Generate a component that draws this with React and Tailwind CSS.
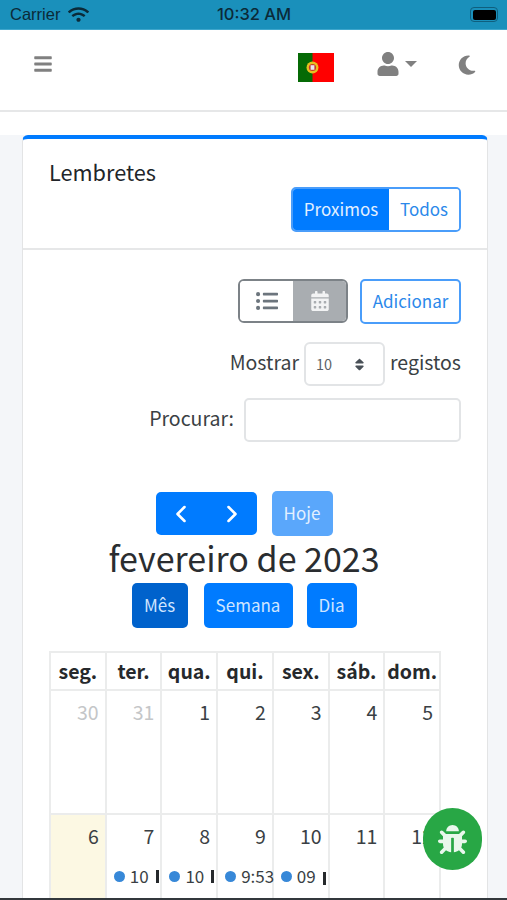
import React from 'react';
import { FaBars, FaUser, FaListUl, FaCalendarAlt, FaBug, FaSort, FaWifi } from 'react-icons/fa';
import { FaMoon } from 'react-icons/fa6';
import { ChevronLeft, ChevronRight } from 'lucide-react';

const weekDays = ['seg.', 'ter.', 'qua.', 'qui.', 'sex.', 'sáb.', 'dom.'];
const firstWeek = ['30', '31', '1', '2', '3', '4', '5'];
const secondWeek = [
    { day: '6', today: true },
    { day: '7', time: '10', bar: true },
    { day: '8', time: '10', bar: true },
    { day: '9', time: '9:53' },
    { day: '10', time: '09', bar: true, low: true },
    { day: '11' },
    { day: '12' },
];

const Flag = () => (
    <svg width="36" height="29" viewBox="0 0 36 29" className="block">
        <rect width="36" height="29" fill="#ff0000" />
        <rect width="14.5" height="29" fill="#056a05" />
        <circle cx="14.5" cy="14.5" r="6" fill="#e8c020" />
        <circle cx="14.5" cy="14.5" r="3.6" fill="#c8342c" />
        <rect x="12.6" y="12.2" width="3.8" height="4.6" fill="#e8e8f0" />
    </svg>
);

const App = () => {
    return (
        <div
            className="h-[900px] w-[507px] overflow-hidden bg-[#f4f6f9] text-[#212529] flex flex-col"
            style={{ fontFamily: '"Noto Sans CJK SC", "Noto Sans", sans-serif' }}
        >
            {/* Status bar */}
            <div className="h-[30px] shrink-0 bg-[#1a90bb] grid grid-cols-3 items-center pl-[10px] pr-[9px] text-[#0b2a38] border-b border-[#3ea6cc]">
                <div className="flex items-center gap-[8px]">
                    <span className="text-[16.5px] leading-none" style={{ fontFamily: '"Liberation Sans", sans-serif' }}>Carrier</span>
                    <FaWifi className="text-[21px]" />
                </div>
                <span className="text-[16.5px] leading-none font-medium text-center whitespace-nowrap" style={{ fontFamily: 'Inter, sans-serif' }}>10:32 AM</span>
                <div className="ml-auto w-[28px] h-[15px] border border-[#0f5f7e] rounded-[4px] p-[1.5px] flex">
                    <div className="flex-1 bg-black rounded-[2px]" />
                </div>
            </div>

            {/* Navbar */}
            <nav className="h-[82px] shrink-0 bg-white border-b-2 border-[#e6e7e8] flex items-start pt-[23px] text-[#808080]">
                <FaBars className="ml-[33px] mt-[1px] text-[20px]" />
                <div className="ml-auto flex items-start">
                    <Flag />
                    <FaUser className="ml-[42px] -mt-[1px] text-[24px]" />
                    <span className="ml-[5px] mt-[8px] w-0 h-0 border-x-[6px] border-x-transparent border-t-[6px] border-t-[#808080]" />
                    <FaMoon className="ml-[39px] mt-[1px] mr-[29px] text-[22px]" />
                </div>
            </nav>

            <div className="h-[23px] shrink-0 bg-white" />

            {/* Card */}
            <main className="mx-[22px] w-[466px] flex-1 bg-white rounded-t-[6px] border-t-[4px] border-[#007bff] border-x border-x-[#e3e4e5] flex flex-col min-h-0">
                <div className="h-[111px] shrink-0 border-b-2 border-[#e6e7e8] px-[26px] pt-[18px]">
                    <h1 className="text-[21.7px] leading-[30px] font-normal">Lembretes</h1>
                    <div className="flex justify-end">
                        <div className="flex h-[45px] rounded-[5px] border-2 border-[#4a9dfa] overflow-hidden text-[17px]">
                            <span className="w-[96px] pb-[2px] bg-[#007bff] text-[#e3f0ff] flex items-center justify-center">Proximos</span>
                            <span className="w-[70px] pb-[2px] bg-white text-[#2a88ea] flex items-center justify-center">Todos</span>
                        </div>
                    </div>
                </div>

                <div className="flex-1 min-h-0 px-[26px] pt-[29px] flex flex-col">
                    {/* Toolbar */}
                    <div className="flex justify-end gap-[12px]">
                        <div className="flex h-[44px] w-[110px] rounded-[6px] overflow-hidden border-2 border-[#7c8287]">
                            <span className="flex-1 bg-white flex items-center justify-center text-[#6c757d] text-[22px]"><FaListUl /></span>
                            <span className="w-[53px] bg-[#a9adb1] flex items-center justify-center text-[#f2f3f4] text-[20px]"><FaCalendarAlt /></span>
                        </div>
                        <span className="h-[45px] w-[101px] pb-[2px] rounded-[5px] border-2 border-[#4a9dfa] text-[#2a88ea] text-[17px] flex items-center justify-center">Adicionar</span>
                    </div>

                    <div className="flex justify-end items-center gap-[5px] mt-[18px] text-[19.5px] text-[#3a3f44]">
                        <span className="mb-[5px]">Mostrar</span>
                        <div className="w-[81px] h-[44px] border-2 border-[#e2e4e6] rounded-[6px] flex items-center pl-[10px] pr-[16px] justify-between text-[14.5px] text-[#5d6369]">
                            <span>10</span>
                            <FaSort className="text-[#495057] text-[15px]" />
                        </div>
                        <span className="mb-[5px]">registos</span>
                    </div>

                    <div className="flex justify-end items-center gap-[10px] mt-[12px] text-[19.5px] text-[#3a3f44]">
                        <span className="mb-[5px]">Procurar:</span>
                        <div className="w-[217px] h-[44px] border-2 border-[#e2e4e6] rounded-[5px] bg-white" />
                    </div>

                    {/* Calendar */}
                    <div className="w-[390px] mt-[49px] flex flex-col items-center">
                        <div className="flex gap-[15px] items-center">
                            <div className="w-[101px] h-[43px] bg-[#007bff] rounded-[5px] flex items-center justify-between px-[11px] text-white">
                                <ChevronLeft size={28} strokeWidth={2.2} />
                                <ChevronRight size={28} strokeWidth={2.2} />
                            </div>
                            <span className="w-[61px] h-[45px] pb-[2px] bg-[#5aa7fb] rounded-[5px] text-[#e3f0ff] text-[17px] flex items-center justify-center">Hoje</span>
                        </div>
                        <h2 className="text-[34px] leading-[43px] pb-[4px] font-normal text-[#2a2d30] whitespace-nowrap">fevereiro de 2023</h2>
                        <div className="flex text-[17px] text-[#cfe5ff]">
                            <span className="w-[56px] h-[45px] pb-[2px] bg-[#0062cc] rounded-[5px] flex items-center justify-center">Mês</span>
                            <span className="ml-[16px] w-[89px] h-[45px] pb-[2px] bg-[#007bff] rounded-[5px] flex items-center justify-center">Semana</span>
                            <span className="ml-[14px] w-[50px] h-[45px] pb-[2px] bg-[#007bff] rounded-[5px] flex items-center justify-center">Dia</span>
                        </div>

                        {/* Month grid */}
                        <div className="w-[392px] self-start mt-[23px] border-l-2 border-[#ebecec] grid grid-cols-7">
                            {weekDays.map((d) => (
                                <div key={d} className="h-[40px] border-y-2 border-r-2 border-[#ebecec] flex items-center justify-center font-bold text-[19.5px] text-[#26292c] whitespace-nowrap">
                                    {d}
                                </div>
                            ))}
                            {firstWeek.map((d, i) => (
                                <div key={d} className={`h-[124px] border-b-2 border-r-2 border-[#ebecec] text-right pr-[6px] pt-[6px] text-[19.5px] leading-[30px] ${i < 2 ? 'text-[#c4c6c8]' : 'text-[#3a3f44]'}`}>
                                    {d}
                                </div>
                            ))}
                            {secondWeek.map((c) => (
                                <div key={c.day} className={`h-[90px] border-r-2 border-[#ebecec] pt-[6px] ${c.today ? 'bg-[#fcf8e3]' : ''}`}>
                                    <div className="text-right pr-[6px] text-[19.5px] leading-[30px] text-[#3a3f44]">{c.day}</div>
                                    {c.time && (
                                        <div className="flex items-center mt-[13px] pl-[7px] text-[17px] leading-[24px] text-[#3a3f44] whitespace-nowrap">
                                            <span className="w-[11px] h-[11px] rounded-full bg-[#3788d8] shrink-0 mr-[5px]" />
                                            <span>{c.time}</span>
                                            {c.bar && <span className={`ml-[7px] w-[3px] h-[13px] bg-[#26292c] shrink-0 ${c.low ? 'mt-[4px]' : ''}`} />}
                                        </div>
                                    )}
                                </div>
                            ))}
                        </div>
                    </div>
                </div>
            </main>

            {/* Bottom edge */}
            <div className="h-[2px] shrink-0 bg-[#33383c]" />

            {/* Floating bug button */}
            <button className="absolute left-[423px] top-[808px] w-[59px] h-[62px] rounded-full bg-[#28a745] flex items-center justify-center text-[#e9f7ec] text-[29px]">
                <FaBug />
            </button>
        </div>
    );
};

export default App;
